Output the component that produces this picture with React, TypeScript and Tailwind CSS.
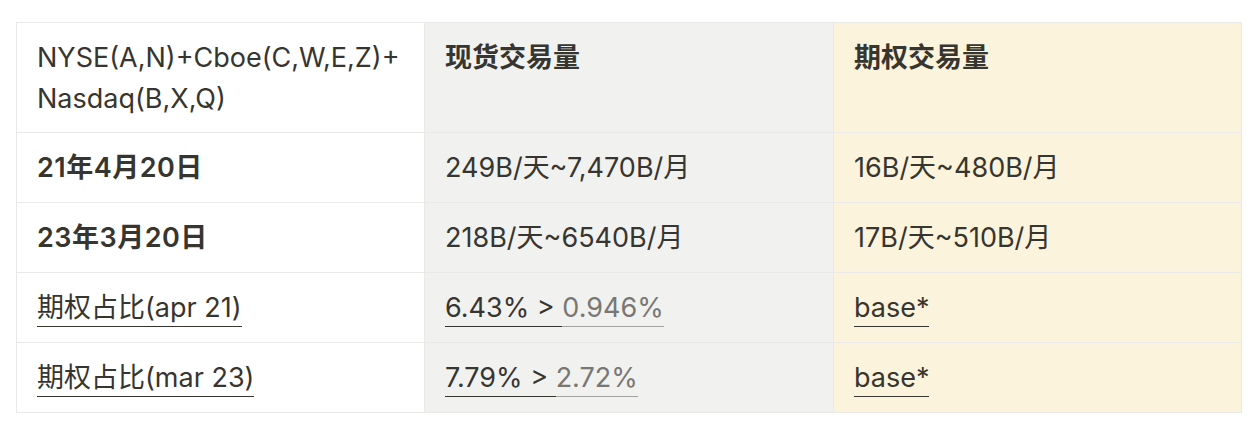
const cell = 'border-r border-b border-[#e9e9e7] px-[20px] pt-[14px] pb-[14px] leading-[41px]';
const head = 'border-r border-b border-[#e9e9e7] px-[20px] pt-[14px] pb-[13px] leading-[41px]';

const Link = ({ children, muted }: { children: React.ReactNode; muted?: boolean }) => (
  <span
    className={
      muted
        ? 'border-b border-[#a5a4a1] pb-[2px] text-[#787774]'
        : 'border-b border-[#37352f] pb-[2px] text-[#37352f]'
    }
  >
    {children}
  </span>
);

const rows = [
  { label: '21年4月20日', spot: '249B/天~7,470B/月', opt: '16B/天~480B/月' },
  { label: '23年3月20日', spot: '218B/天~6540B/月', opt: '17B/天~510B/月' },
];

const ratios = [
  { label: '期权占比(apr 21)', a: '6.43% > ', b: '0.946%' },
  { label: '期权占比(mar 23)', a: '7.79% > ', b: '2.72%' },
];

const App = () => {
  return (
    <div className="w-[1260px] h-[436px] bg-white pt-[22px] pl-[16px] font-['Inter','Noto_Sans_CJK_SC',sans-serif] text-[27px] text-[#37352f]">
      <div className="grid grid-cols-[408px_409px_408px] w-[1226px] border-l border-t border-[#e9e9e7]">
        {/* header */}
        <div className={`${head} bg-white`}>
          NYSE(A,N)+Cboe(C,W,E,Z)+
          <br />
          Nasdaq(B,X,Q)
        </div>
        <div className={`${head} bg-[#f1f1ef] font-semibold`}>现货交易量</div>
        <div className={`${head} bg-[#fbf3db] font-semibold`}>期权交易量</div>

        {rows.map((r) => (
          <>
            <div key={r.label} className={`${cell} bg-white font-semibold tracking-[0.5px]`}>{r.label}</div>
            <div className={`${cell} bg-[#f1f1ef]`}>{r.spot}</div>
            <div className={`${cell} bg-[#fbf3db]`}>{r.opt}</div>
          </>
        ))}

        {ratios.map((r) => (
          <>
            <div key={r.label} className={`${cell} bg-white`}>
              <Link>{r.label}</Link>
            </div>
            <div className={`${cell} bg-[#f1f1ef]`}>
              <Link>{r.a}</Link>
              <Link muted>{r.b}</Link>
            </div>
            <div className={`${cell} bg-[#fbf3db]`}>
              <Link>base*</Link>
            </div>
          </>
        ))}
      </div>
    </div>
  );
};

export default App;
